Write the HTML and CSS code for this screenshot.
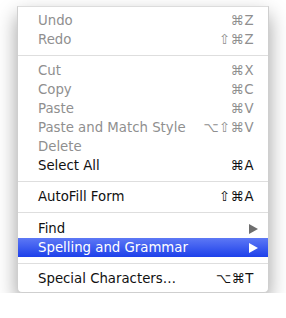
FILE: index.html
```html
<!DOCTYPE html>
<html lang="en">
<head>
  <meta charset="UTF-8">
  <title>Edit Menu</title>
  <link rel="stylesheet" href="styles.css">
</head>
<body>
  <div class="menu">
    <div class="item disabled"><span>Undo</span><span class="key">⌘Z</span></div>
    <div class="item disabled"><span>Redo</span><span class="key">⇧⌘Z</span></div>
    <div class="sep"></div>
    <div class="item disabled"><span>Cut</span><span class="key">⌘X</span></div>
    <div class="item disabled"><span>Copy</span><span class="key">⌘C</span></div>
    <div class="item disabled"><span>Paste</span><span class="key">⌘V</span></div>
    <div class="item disabled"><span>Paste and Match Style</span><span class="key">⌥⇧⌘V</span></div>
    <div class="item disabled"><span>Delete</span></div>
    <div class="item"><span>Select All</span><span class="key">⌘A</span></div>
    <div class="sep"></div>
    <div class="item"><span>AutoFill Form</span><span class="key">⇧⌘A</span></div>
    <div class="sep tall"></div>
    <div class="item"><span>Find</span><span class="arrow"></span></div>
    <div class="item active"><span>Spelling and Grammar</span><span class="arrow"></span></div>
    <div class="sep"></div>
    <div class="item"><span>Special Characters…</span><span class="key">⌥⌘T</span></div>
  </div>
</body>
</html>
```

FILE: styles.css
```css
body {
  margin: 0;
  background: #fff;
  font-family: 'DejaVu Sans', sans-serif;
  font-size: 13.3px;
}

.menu {
  width: 250px;
  margin: 6px 0 0 17px;
  padding: 4px 0;
  background: #fff;
  border: 1px solid #cfcfcf;
  border-top-color: #dcdcdc;
  border-radius: 0 0 5px 5px;
  box-shadow: 0 9px 20px rgba(0, 0, 0, 0.38);
}

.item {
  height: 19px;
  display: flex;
  align-items: center;
  justify-content: space-between;
  padding: 0 14px 0 20px;
  color: #111;
}

.item.disabled {
  color: #8f8f8f;
}

.item.active {
  background: linear-gradient(#5d78f5, #1d40ea);
  color: #fff;
}

.key {
  letter-spacing: 0.5px;
}

.arrow {
  width: 0;
  height: 0;
  margin-right: -4px;
  border-top: 5px solid transparent;
  border-bottom: 5px solid transparent;
  border-left: 9px solid #6e6e6e;
}

.active .arrow {
  border-left-color: #fff;
}

.sep {
  height: 12px;
  display: flex;
  align-items: center;
}

.sep.tall {
  height: 13px;
}

.sep::after {
  content: '';
  flex: 1;
  height: 1px;
  background: #dedede;
}
```
